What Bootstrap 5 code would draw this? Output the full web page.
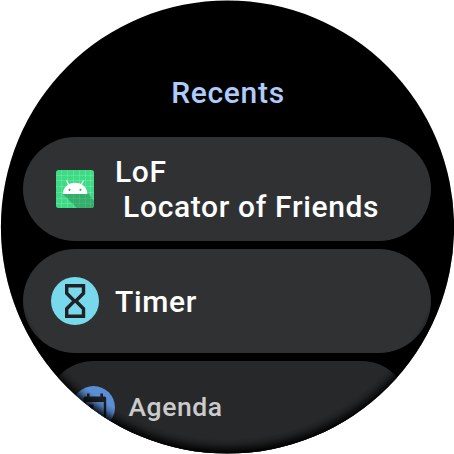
<!DOCTYPE html>
<html lang="en">
<head>
<meta charset="utf-8">
<meta name="viewport" content="width=device-width, initial-scale=1">
<title>Recents</title>
<link href="https://cdn.jsdelivr.net/npm/bootstrap@5.3.0/dist/css/bootstrap.min.css" rel="stylesheet">
<style>
  body { background: #fff; font-family: Roboto, "Liberation Sans", sans-serif; }
  .watch { width: 454px; height: 454px; background: #000; clip-path: circle(226.6px at 227.5px 227px); }
  .title { color: #aecbfa; font-size: 30px; line-height: 35px; letter-spacing: .7px; padding-top: 75px; margin: 0 0 27px 2px; }
  .chip { width: 408px; height: 104px; border-radius: 52px; background: #303133; color: #fff; padding-left: 28px; gap: 16px; font-size: 30px; line-height: 35px; letter-spacing: .65px; }
  .chips { gap: 8px; }
  .chip-icon { width: 48px; height: 48px; }
  .chip-fading { width: 361px; height: 92px; border-radius: 46px; background: #27282a; color: #cbcbcb; padding-left: 25px; gap: 14px; font-size: 26.5px; letter-spacing: .55px; }
  .chip-fading .chip-icon { width: 43px; height: 43px; }
  .chip-fading .fw-label { padding-bottom: 2px; }
  .fw-label { font-weight: 500; }
  .rim { inset: 0; background: radial-gradient(circle at 227px 219px, transparent 220px, rgba(0,0,0,.2) 225px, rgba(0,0,0,.8) 232px, #000 235px); }
</style>
<script src="https://cdn.jsdelivr.net/npm/bootstrap@5.3.0/dist/js/bootstrap.bundle.min.js"></script>
</head>
<body class="overflow-hidden">
<main class="watch position-relative overflow-hidden">
  <h1 class="title text-center fw-label">Recents</h1>
  <div class="chips d-flex flex-column align-items-center">
    <div class="chip d-flex align-items-center flex-shrink-0">
      <svg class="chip-icon flex-shrink-0" viewBox="0 0 48 48">
        <rect x="5" y="5" width="38" height="38" rx="2.500" fill="#3ddc84"/>
        <path d="M10.500 5v38M16.500 5v38M22.500 5v38M28.500 5v38M34.500 5v38M39.500 5v38M5 10.500h38M5 15.500h38M5 21.500h38M5 27.500h38M5 33.500h38M5 38.500h38" stroke="#fff" stroke-opacity=".2" stroke-width=".8"/>
        <path d="M12 29L26 43H40.500Q43 43 43 40.500V36L34 24Z" fill="#123d2c" fill-opacity=".28"/>
        <path d="M11.800 29a12.200 11.200 0 0 1 24.600 0z" fill="#fff"/>
        <path d="M18 20l-2.200-4M30 20l2.200-4" stroke="#fff" stroke-width="1.200" stroke-linecap="round"/>
        <circle cx="18.500" cy="24.800" r="1.100" fill="#2fae68"/><circle cx="29.500" cy="24.800" r="1.100" fill="#2fae68"/>
      </svg>
      <div class="fw-label">LoF<br>&nbsp;Locator of Friends</div>
    </div>
    <div class="chip d-flex align-items-center flex-shrink-0">
      <svg class="chip-icon flex-shrink-0" viewBox="0 0 48 48">
        <circle cx="24" cy="24" r="24" fill="#78d9ec"/>
        <path d="M15.700 8.700H32.500V16.300L24.800 24L32.500 31.700V39.300H15.700V31.700L23.400 24L15.700 16.300Z" fill="none" stroke="#202124" stroke-width="3.400"/>
      </svg>
      <div class="fw-label">Timer</div>
    </div>
    <div class="chip chip-fading d-flex align-items-center flex-shrink-0">
      <svg class="chip-icon flex-shrink-0" viewBox="0 0 43 43">
        <circle cx="21.500" cy="21.500" r="21.500" fill="#5b8ed4"/>
        <path d="M15 7.500h2.600v3h10.800v-3H31v3h1.500q1.700 0 1.700 1.700v20.500q0 1.700-1.700 1.700H13.200q-1.700 0-1.700-1.700V12.200q0-1.700 1.700-1.700H15zM13.800 16v16.300h18V16z" fill="#1c1e21" fill-rule="evenodd"/>
        <rect x="16.500" y="18.500" width="5" height="5" rx="1" fill="#1c1e21"/>
      </svg>
      <div class="fw-label">Agenda</div>
    </div>
  </div>
  <div class="rim position-absolute"></div>
</main>
</body>
</html>
